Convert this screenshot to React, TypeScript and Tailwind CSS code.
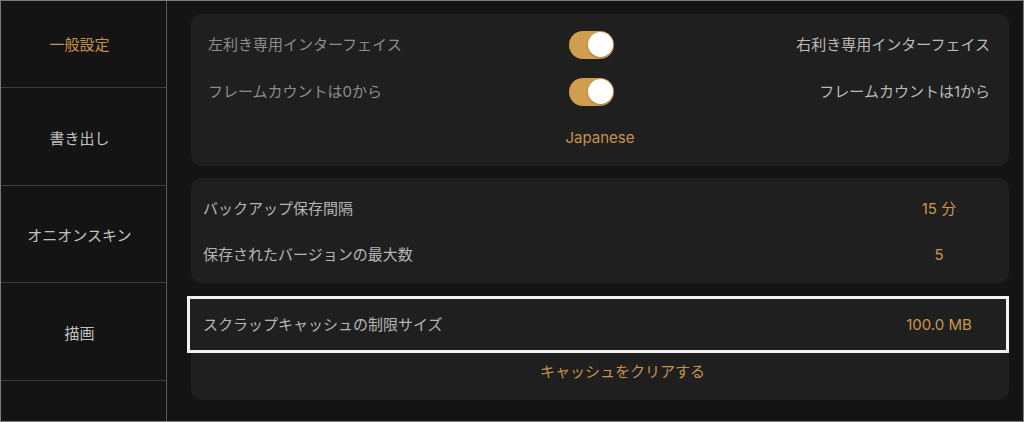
const font = 'font-["Inter","Noto_Sans_CJK_JP",sans-serif]';

const tabs = [
  { label: '一般設定', h: 'h-[87px]', active: true, pt: '' },
  { label: '書き出し', h: 'h-[98px]', active: false, pt: 'pt-[3px]' },
  { label: 'オニオンスキン', h: 'h-[97px]', active: false, pt: 'pt-[2px]' },
  { label: '描画', h: 'h-[98px]', active: false, pt: 'pt-[3px]' },
];

function Toggle() {
  return (
    <div className="flex h-[28px] w-[45px] items-center justify-end rounded-full bg-[#d19e4f] p-[1.5px]">
      <div className="h-[25px] w-[25px] rounded-full bg-white shadow-[0_1px_2px_rgba(0,0,0,0.25)]" />
    </div>
  );
}

function ToggleRow({ left, right }: { left: string; right: string }) {
  return (
    <div className="grid h-[47px] grid-cols-[361px_45px_1fr] items-center pl-[17px] pr-[19px]">
      <span className="text-[#8d8d8d]">{left}</span>
      <Toggle />
      <span className="text-right text-[#bababa]">{right}</span>
    </div>
  );
}

function ValueRow({ label, value }: { label: string; value: string }) {
  return (
    <div className="flex h-[46px] items-center pl-[12px] pr-[20px]">
      <span className="flex-1 text-[#b5b5b5]">{label}</span>
      <span className="w-[100px] text-center text-[#cc984b]">{value}</span>
    </div>
  );
}

export default function App() {
  return (
    <div className={`flex h-[422px] w-[1024px] border border-[#7c7c7c] bg-[#141414] text-[15px] leading-none ${font}`}>
      <aside className="flex w-[166px] shrink-0 flex-col border-r border-[#5a5a5a] bg-[#141414]">
        {tabs.map((t) => (
          <div
            key={t.label}
            className={`flex ${t.h} ${t.pt} items-center justify-center border-b border-[#3d3d3d] pr-[8px] ${
              t.active ? 'text-[#c8944a]' : 'text-[#c2c2c2]'
            }`}
          >
            {t.label}
          </div>
        ))}
      </aside>

      <main className="flex flex-1 flex-col pl-[24px] pr-[14px] pt-[13px]">
        <section className="rounded-[10px] bg-[#1f1f1f] pb-[6px] pt-[7px]">
          <ToggleRow left="左利き専用インターフェイス" right="右利き専用インターフェイス" />
          <ToggleRow left="フレームカウントは0から" right="フレームカウントは1から" />
          <div className="flex h-[45px] items-center justify-center text-[#c8944a]">Japanese</div>
        </section>

        <section className="mt-[12px] rounded-[10px] bg-[#1f1f1f] pb-[6px] pt-[7px]">
          <ValueRow label="バックアップ保存間隔" value="15 分" />
          <ValueRow label="保存されたバージョンの最大数" value="5" />
        </section>

        <section className="mt-[13px] rounded-[10px] bg-[#1f1f1f] pb-[11px]">
          <div className="-ml-[4px] flex h-[57px] items-center border-[3px] border-[#f2f2f2] bg-[#1f1f1f] pl-[13px] pr-[17px]">
            <span className="flex-1 text-[#b5b5b5]">スクラップキャッシュの制限サイズ</span>
            <span className="w-[100px] text-center text-[#cc984b]">100.0 MB</span>
          </div>
          <div className="flex h-[36px] items-center justify-center pl-[45px] text-[#c8944a]">
            キャッシュをクリアする
          </div>
        </section>
      </main>
    </div>
  );
}
